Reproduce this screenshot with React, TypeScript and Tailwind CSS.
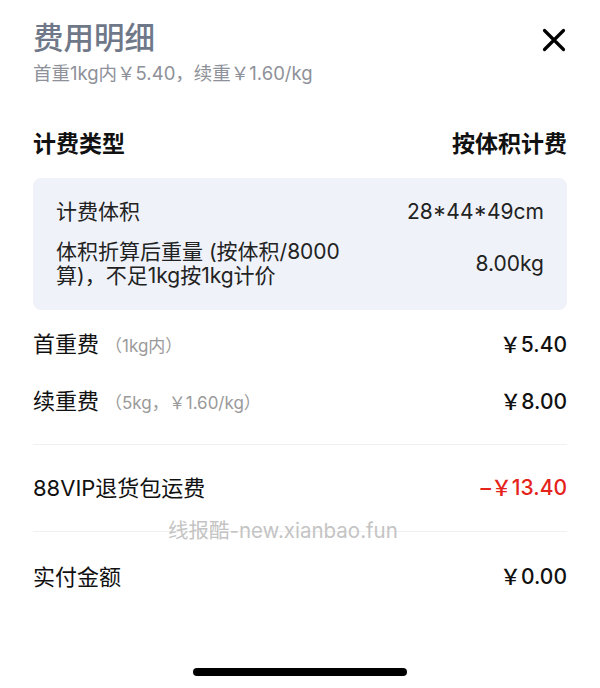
const font = { fontFamily: 'Inter, "Noto Sans CJK SC", sans-serif' };

function Row({ label, note, value, red }: { label: string; note?: string; value: string; red?: boolean }) {
  return (
    <div className="flex items-center justify-between leading-[30px]">
      <div className="flex items-baseline">
        <span className="text-[22px] text-[#111]">{label}</span>
        {note && <span className="ml-[6px] text-[17px] text-[#9a9a9a]">{note}</span>}
      </div>
      <span className={`text-[21px] font-medium ${red ? 'text-[#e5231b]' : 'text-[#111]'}`}>{value}</span>
    </div>
  );
}

export default function App() {
  return (
    <div className="relative h-[688px] w-[600px] bg-white px-[33px] pt-[19px]" style={font}>
      <div className="flex items-start justify-between">
        <h1 className="text-[30.5px] font-medium leading-[38px] text-[#6f7888]">费用明细</h1>
        <button className="mr-[1px] mt-[9px]" aria-label="关闭">
          <svg width="24" height="24" viewBox="0 0 24 24">
            <path d="M2.5 2.5 L21.5 21.5 M21.5 2.5 L2.5 21.5" stroke="#000" strokeWidth="3.2" strokeLinecap="round" />
          </svg>
        </button>
      </div>
      <p className="mt-[4px] text-[18.5px] leading-[24px] text-[#8e9199]">首重1kg内￥5.40，续重￥1.60/kg</p>

      <div className="mt-[44px] flex items-center justify-between text-[23px] font-bold leading-[30px] text-[#111]">
        <span>计费类型</span>
        <span>按体积计费</span>
      </div>

      <div className="mt-[19px] rounded-[8px] bg-[#eff2f9] px-[23px] pb-[22px] pt-[20px] text-[21px] text-[#222]">
        <div className="flex items-center justify-between leading-[28px]">
          <span>计费体积</span>
          <span>28*44*49cm</span>
        </div>
        <div className="mt-[14px] flex items-center justify-between leading-[24px]">
          <span className="w-[312px]">体积折算后重量 (按体积/8000算)，不足1kg按1kg计价</span>
          <span>8.00kg</span>
        </div>
      </div>

      <div className="mt-[19px]">
        <Row label="首重费" note="（1kg内）" value="￥5.40" />
      </div>
      <div className="mt-[25px]">
        <Row label="续重费" note="（5kg，￥1.60/kg）" value="￥8.00" />
      </div>

      <div className="mt-[26px] h-px bg-[#f0f0f0]" />
      <div className="mt-[28px]">
        <Row label="88VIP退货包运费" value="–￥13.40" red />
      </div>

      <div className="relative mt-[28px] h-px bg-[#f0f0f0]">
        <span className="absolute left-[135px] top-[-13px] text-[20.5px] leading-[26px] text-[#c4c4c4]">线报酷-new.xianbao.fun</span>
      </div>
      <div className="mt-[30px]">
        <Row label="实付金额" value="￥0.00" />
      </div>

      <div className="absolute bottom-[12px] left-[193px] h-[8px] w-[214px] rounded-full bg-black" />
    </div>
  );
}
